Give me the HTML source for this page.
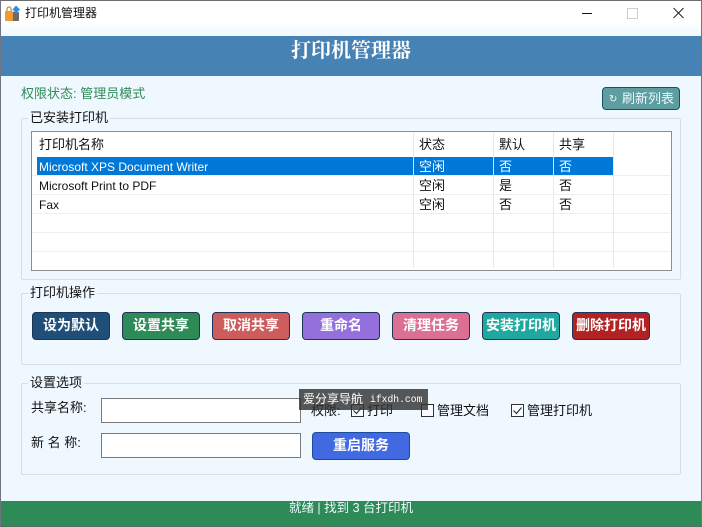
<!DOCTYPE html>
<html lang="zh-CN"><head><meta charset="utf-8"><title>打印机管理器</title>
<style>
html,body{margin:0;padding:0;width:702px;height:527px;overflow:hidden;background:#f0f8ff}
*{box-sizing:border-box}
body{position:relative;font-family:"Liberation Sans","Noto Sans CJK SC",sans-serif;font-size:12px;color:#111}
div,span.a{position:absolute}
.t{white-space:nowrap;line-height:16px;font-size:13px}
.gb{border:1px solid #d5dfe8;border-radius:2px}
.lg{background:#f0f8ff;padding:0 2px;left:28px;font-size:13px;line-height:16px;white-space:nowrap;color:#111}
.btn{top:312px;width:78px;height:28px;border:1px solid #1d3557;border-radius:4px;color:#fff;font-weight:bold;font-size:14px;text-align:center;line-height:25px;white-space:nowrap;letter-spacing:0}
.hl{left:32px;width:638px;height:1px;background:#eeeeee}
.vl{top:132px;width:1px;height:136px;background:#e8e8e8}
.inp{left:101px;width:200px;height:25px;background:#fff;border:1px solid #7a7a7a}
.cb{top:404px;width:13px;height:13px;border:1px solid #333;background:#f8fbff}
.c{font-size:13px;line-height:16px;white-space:nowrap}
.w{color:#fff}
</style></head><body>
<div style="left:0;top:0;width:702px;height:25px;background:#fff"></div>
<div style="left:0;top:25px;width:702px;height:11px;background:linear-gradient(#fbfdff,#f0f8ff)"></div>
<div style="left:0;top:0;width:702px;height:1px;background:#6e6e6e"></div>
<div style="left:0;top:0;width:1px;height:527px;background:#6e7480"></div>
<div style="left:701px;top:0;width:1px;height:527px;background:#6e7480"></div>

<svg style="position:absolute;left:4px;top:5px" width="17" height="17" viewBox="0 0 17 17">
<rect x="1" y="7" width="14" height="9" rx="1" fill="#6e6a66"/>
<rect x="1" y="6" width="8" height="10" rx="1" fill="#ee9a35"/>
<path d="M3 6 V4 a2 2 0 0 1 4 0 V6" fill="none" stroke="#c98a40" stroke-width="1.3"/>
<path d="M12 0.5 L16 4.500 L12 8.500 L8.500 4.500 Z" fill="#2f8fe0"/>
</svg>
<div class="t" style="left:25px;top:5px;color:#111;font-size:12px">打印机管理器</div>
<svg style="position:absolute;left:580px;top:5px" width="120" height="18" viewBox="0 0 120 18">
<path d="M2 8.500 H12" stroke="#111" stroke-width="1"/>
<rect x="47.500" y="3.500" width="10" height="10" fill="none" stroke="#cfcfcf"/>
<path d="M93.500 3 L103.500 13 M103.500 3 L93.500 13" stroke="#222" stroke-width="1" fill="none"/>
</svg>

<div style="left:1px;top:36px;width:700px;height:40px;background:#4682b4"></div>
<div class="w" style="left:1px;top:37px;width:700px;text-align:center;font:bold 20px/28px 'Liberation Serif','Noto Serif CJK SC',serif">打印机管理器</div>

<div class="t" style="left:21px;top:86px;color:#2e8b57;font-size:13px">权限状态: 管理员模式</div>
<div style="left:602px;top:87px;width:78px;height:23px;background:#5f9ea0;border:1px solid #17506a;border-radius:4px;color:#f0f8ff;font-size:13px;line-height:21px;white-space:nowrap"><span style="position:absolute;left:6px;top:1px;font-size:10px">↻</span><span style="position:absolute;left:19px;top:0">刷新列表</span></div>

<div class="gb" style="left:21px;top:118px;width:660px;height:162px"></div>
<div class="lg" style="top:110px">已安装打印机</div>
<div style="left:31px;top:131px;width:641px;height:140px;background:#fff;border:1px solid #8a8f96"></div>
<div class="hl" style="top:175px"></div><div class="hl" style="top:194px"></div><div class="hl" style="top:213px"></div><div class="hl" style="top:232px"></div><div class="hl" style="top:251px"></div>
<div class="vl" style="left:413px"></div><div class="vl" style="left:493px"></div><div class="vl" style="left:553px"></div><div class="vl" style="left:613px"></div>
<div style="left:37px;top:157px;width:576px;height:18px;background:#0078d7"></div>
<div style="left:413px;top:157px;width:1px;height:18px;background:#cfe6f7"></div>
<div style="left:493px;top:157px;width:1px;height:18px;background:#cfe6f7"></div>
<div style="left:553px;top:157px;width:1px;height:18px;background:#cfe6f7"></div>

<div class="c" style="left:39px;top:137px">打印机名称</div><div class="c" style="left:419px;top:137px">状态</div><div class="c" style="left:499px;top:137px">默认</div><div class="c" style="left:559px;top:137px">共享</div>
<div class="c w" style="left:39px;top:159px;font-size:12px">Microsoft XPS Document Writer</div><div class="c w" style="left:419px;top:159px">空闲</div><div class="c w" style="left:499px;top:159px">否</div><div class="c w" style="left:559px;top:159px">否</div>
<div class="c" style="left:39px;top:178px;font-size:12px">Microsoft Print to PDF</div><div class="c" style="left:419px;top:178px">空闲</div><div class="c" style="left:499px;top:178px">是</div><div class="c" style="left:559px;top:178px">否</div>
<div class="c" style="left:39px;top:197px;font-size:12px">Fax</div><div class="c" style="left:419px;top:197px">空闲</div><div class="c" style="left:499px;top:197px">否</div><div class="c" style="left:559px;top:197px">否</div>

<div class="gb" style="left:21px;top:293px;width:660px;height:72px"></div>
<div class="lg" style="top:285px">打印机操作</div>
<div class="btn" style="left:32px;background:#1f4e79">设为默认</div>
<div class="btn" style="left:122px;background:#2e8b57">设置共享</div>
<div class="btn" style="left:212px;background:#cd5c5c">取消共享</div>
<div class="btn" style="left:302px;background:#9370db">重命名</div>
<div class="btn" style="left:392px;background:#db7093">清理任务</div>
<div class="btn" style="left:482px;background:#20a8a0">安装打印机</div>
<div class="btn" style="left:572px;background:#b22222">删除打印机</div>

<div class="gb" style="left:21px;top:383px;width:660px;height:92px"></div>
<div class="lg" style="top:375px">设置选项</div>
<div class="t" style="left:31px;top:400px">共享名称:</div>
<div class="t" style="left:31px;top:435px">新 名 称:</div>
<div class="inp" style="top:398px"></div>
<div class="inp" style="top:433px"></div>
<div class="t" style="left:311px;top:403px">权限:</div>
<div class="cb" style="left:351px"></div>
<div class="cb" style="left:421px"></div>
<div class="cb" style="left:511px"></div>
<svg style="position:absolute;left:351px;top:404px" width="13" height="13" viewBox="0 0 13 13"><path d="M2.500 6.500 L5.500 9.500 L10.500 3.500" fill="none" stroke="#333" stroke-width="1.200"/></svg>
<svg style="position:absolute;left:511px;top:404px" width="13" height="13" viewBox="0 0 13 13"><path d="M2.500 6.500 L5.500 9.500 L10.500 3.500" fill="none" stroke="#333" stroke-width="1.200"/></svg>
<div class="t" style="left:367px;top:403px">打印</div>
<div class="t" style="left:437px;top:403px">管理文档</div>
<div class="t" style="left:527px;top:403px">管理打印机</div>
<div style="left:312px;top:432px;width:98px;height:28px;background:#4169e1;border:1px solid #1d4a9a;border-radius:4px;color:#fff;font-weight:bold;font-size:14px;line-height:25px;text-align:center">重启服务</div>

<div style="left:299px;top:389px;width:129px;height:21px;background:rgba(50,50,50,.82);color:#fff;font-size:12px;line-height:21px;white-space:nowrap"><span style="position:absolute;left:4px;top:0">爱分享导航</span><span style="position:absolute;left:71px;top:0;font-family:'Liberation Mono',monospace;font-size:9.700px">ifxdh.com</span></div>

<div style="left:1px;top:501px;width:700px;height:25px;background:#2e8b57"></div>
<div style="left:0;top:526px;width:702px;height:1px;background:#5a6a60"></div>
<div style="left:0;top:500px;width:702px;text-align:center;color:#f0f8ff;font-size:12.500px;line-height:17px">就绪 | 找到 3 台打印机</div>
</body></html>
